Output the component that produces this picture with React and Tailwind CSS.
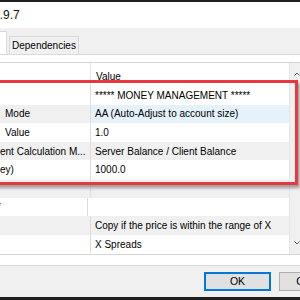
export default function App() {
  const rows = [
    { name: "", nameClass: "", value: "***** MONEY MANAGEMENT *****", bg: "bg-white" },
    { name: "Mode", nameClass: "pl-[5px]", value: "AA (Auto-Adjust to account size)", bg: "bg-[#f0f0f0]", sel: true },
    { name: "Value", nameClass: "pl-[5px]", value: "1.0", bg: "bg-white" },
    { name: "ent Calculation M...", nameClass: "pl-0", value: "Server Balance / Client Balance", bg: "bg-[#f0f0f0]" },
    { name: "ey)", nameClass: "pl-0", value: "1000.0", bg: "bg-white" },
    { name: "", nameClass: "", value: "", bg: "bg-[#f0f0f0]" },
    { name: "*", nameClass: "-ml-[3px]", value: "", bg: "bg-white" },
    { name: "", nameClass: "", value: "Copy if the price is within the range of X", bg: "bg-[#f0f0f0]" },
    { name: "", nameClass: "", value: "X Spreads", bg: "bg-white" },
  ];

  return (
    <div className="relative w-[300px] h-[300px] overflow-hidden bg-[#f0f0f0] font-['Liberation_Sans',Arial,sans-serif] text-[10px] text-black">
      {/* window top edge */}
      <div className="h-[2px] bg-[#1f1f1f]" />

      {/* title bar */}
      <div className="h-[26px] bg-white flex items-center">
        <span className="-ml-[7px] text-[12px] text-[#111]">1.9.7</span>
      </div>

      {/* tabs */}
      <div className="h-[26px] flex items-end">
        <div className="w-[7px] h-[23px] bg-white border-t border-r border-[#d9d9d9]" />
        <div className="ml-[2px] h-[18px] px-[2px] flex items-center border border-b-0 border-[#d9d9d9] bg-[#f0f0f0]">
          Dependencies
        </div>
      </div>

      {/* tab panel */}
      <div className="h-[212px] bg-white border-t border-b border-[#d9d9d9] pt-[7px]">
        <div className="flex h-[193px] border-t border-b border-[#d4d4d4]">
          <div className="w-[293px] flex flex-col">
            <div className="h-[23px] flex shrink-0">
              <div className="w-[91px] border-r border-[#e3e3e3]" />
              <div className="flex-1 flex items-center pl-[5px] pt-[4px]">Value</div>
            </div>
            {rows.map((r, i) => (
              <div key={i} className={`h-[18.6px] flex shrink-0 ${r.bg}`}>
                <div className={`w-[91px] border-r border-[#dcdcdc] flex items-center overflow-hidden whitespace-nowrap ${r.nameClass}`}>
                  {r.name}
                </div>
                <div className={`flex-1 flex items-center pl-[4px] whitespace-nowrap overflow-hidden ${r.sel ? "bg-[#e5f1fb]" : ""}`}>
                  {r.value}
                </div>
              </div>
            ))}
          </div>
          {/* scrollbar */}
          <div className="flex-1 bg-[#f0f0f0] border-l border-[#e6e6e6] flex flex-col items-center justify-between py-[9px]">
            <svg width="6" height="4" viewBox="0 0 6 4" className="ml-[4px]">
              <path d="M0.5 3.5 L3 1 L5.5 3.5" fill="none" stroke="#606060" strokeWidth="1" />
            </svg>
            <svg width="6" height="4" viewBox="0 0 6 4" className="ml-[4px]">
              <path d="M0.5 0.5 L3 3 L5.5 0.5" fill="none" stroke="#606060" strokeWidth="1" />
            </svg>
          </div>
        </div>
      </div>

      {/* buttons */}
      <div className="h-[31px] flex items-start pt-[6px] pl-[204px] gap-[8px]">
        <button className="w-[67px] h-[19px] shrink-0 bg-[#e1e1e1] border-2 border-[#0078d7] flex items-center justify-center text-[10.5px]">
          OK
        </button>
        <button className="w-[67px] h-[19px] shrink-0 bg-[#e1e1e1] border border-[#adadad] flex items-center justify-center text-[10.5px]">
          Cancel
        </button>
      </div>
      <div className="h-[3px] bg-[#1f1f1f]" />

      {/* red highlight annotation */}
      <div className="absolute left-[-10px] top-[80px] w-[308px] h-[105px] border-[3px] border-[#e8383d] shadow-[2px_3px_3px_rgba(0,0,0,0.35)] pointer-events-none" />
    </div>
  );
}
